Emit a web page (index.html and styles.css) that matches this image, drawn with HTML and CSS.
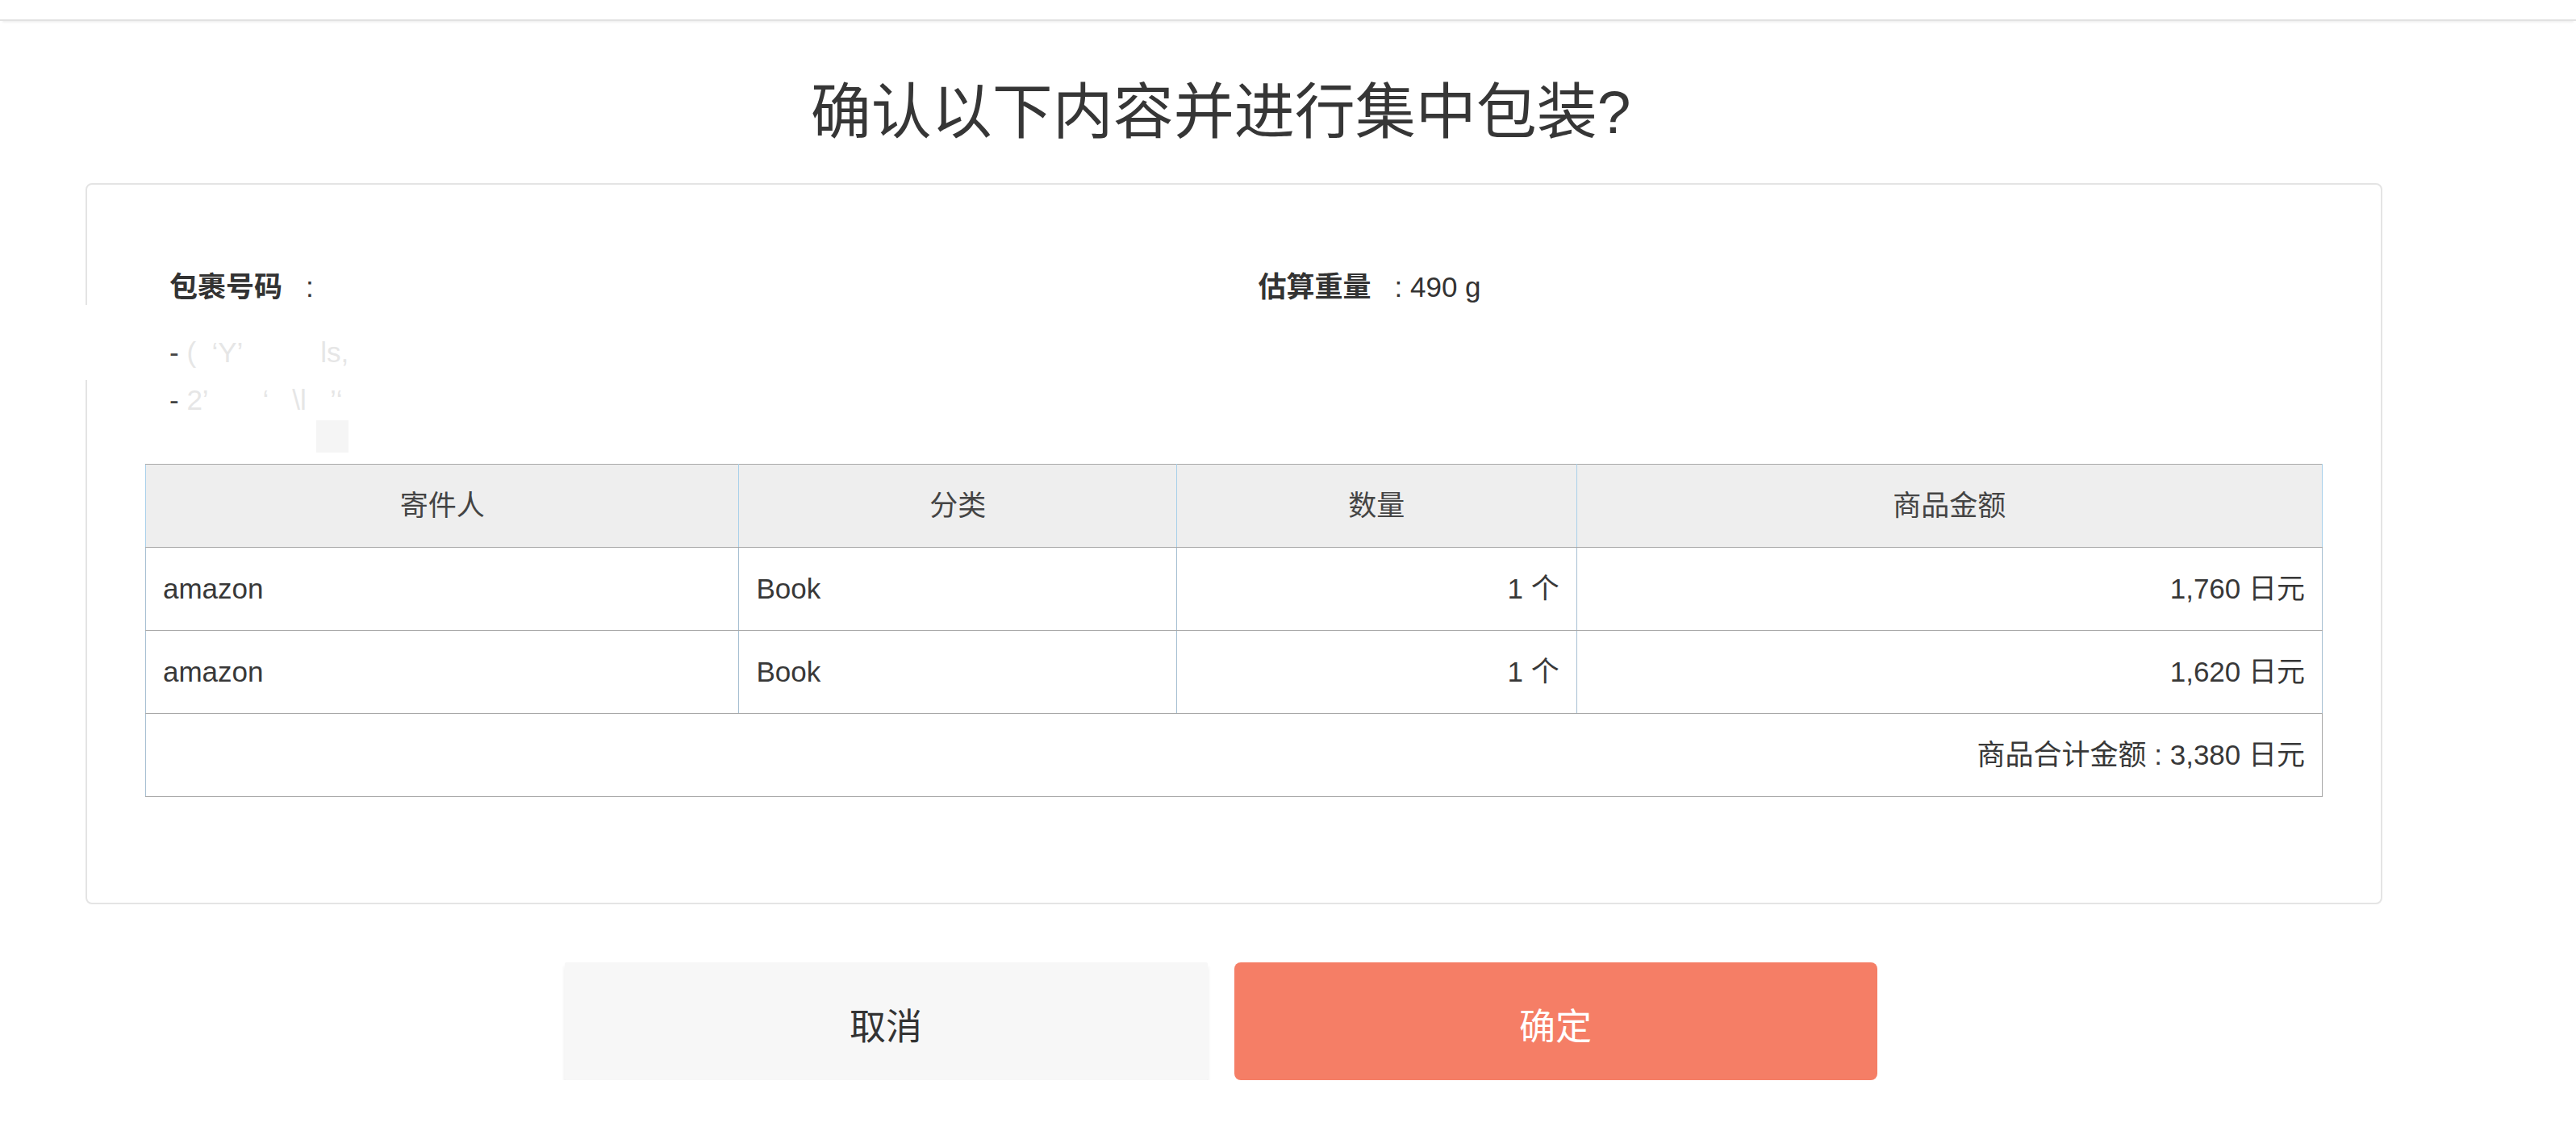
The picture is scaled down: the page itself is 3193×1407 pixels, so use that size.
FILE: index.html
```html
<!DOCTYPE html>
<html lang="zh-CN">
<head>
<meta charset="utf-8">
<title>集中包装确认</title>
<link rel="stylesheet" href="styles.css">
</head>
<body>
<header class="topbar"></header>
<main class="page">
  <h1 class="title">确认以下内容并进行集中包装?</h1>

  <section class="card">
    <div class="info">
      <div class="info-col">
        <div class="info-line"><span class="info-label">包裹号码</span>:</div>
        <ul class="parcel-list">
          <li>- <span class="faint">(  ‘Y’          ls,</span></li>
          <li>- <span class="faint">2’       ‘   \l   ’‘</span></li>
        </ul>
      </div>
      <div class="info-col">
        <div class="info-line"><span class="info-label">估算重量</span>: 490 g</div>
      </div>
    </div>

    <table class="items">
      <colgroup>
        <col class="c-sender">
        <col class="c-type">
        <col class="c-qty">
        <col class="c-price">
      </colgroup>
      <thead>
        <tr>
          <th>寄件人</th>
          <th>分类</th>
          <th>数量</th>
          <th>商品金额</th>
        </tr>
      </thead>
      <tbody>
        <tr>
          <td>amazon</td>
          <td>Book</td>
          <td class="num">1 个</td>
          <td class="num">1,760 日元</td>
        </tr>
        <tr>
          <td>amazon</td>
          <td>Book</td>
          <td class="num">1 个</td>
          <td class="num">1,620 日元</td>
        </tr>
        <tr class="total">
          <td class="num" colspan="4">商品合计金额 : 3,380 日元</td>
        </tr>
      </tbody>
    </table>

    <span class="mask-edge"></span>
    <span class="mask-spot"></span>
  </section>

  <div class="actions">
    <button class="btn btn-cancel" type="button">取消</button>
    <button class="btn btn-ok" type="button">确定</button>
  </div>
</main>
</body>
</html>
```

FILE: styles.css
```css
html, body {
  margin: 0;
  padding: 0;
  background: #ffffff;
}

body {
  font-family: "Liberation Sans", Arial, "Noto Sans CJK SC", sans-serif;
  font-size: 35px;
  color: #333333;
}

.topbar {
  height: 24px;
  border-bottom: 2px solid #e2e2e2;
  box-shadow: 0 5px 2px -3px #f2f2f2;
}

.page {
  width: 3026px;
}

.title {
  margin: 68px 0 43px;
  font-size: 75px;
  line-height: 90px;
  font-weight: normal;
  color: #363636;
  text-align: center;
}

/* summary card */
.card {
  position: relative;
  margin: 0 73px 0 106px;
  padding: 97px 72px 131px;
  border: 2px solid #e4e4e4;
  border-radius: 8px;
}

.info {
  display: grid;
  grid-template-columns: 1fr 1fr;
}

.info-col {
  padding-left: 30px;
}

.info-line {
  line-height: 59px;
  white-space: pre;
}

.info-label {
  font-weight: bold;
  margin-right: 29px;
  color: #333333;
}

.parcel-list {
  list-style: none;
  margin: 22px 0 0;
  padding: 0;
}

.parcel-list li {
  line-height: 59px;
  white-space: pre;
  color: #444444;
}

.faint {
  color: #e6e6e6;
}

/* item table */
.items {
  width: 100%;
  margin-top: 50px;
  border-collapse: collapse;
  table-layout: fixed;
  border: 1px solid #a8a8a8;
  border-left-color: #a6bfd2;
}

.c-sender { width: 27.26%; }
.c-type { width: 20.11%; }
.c-qty { width: 18.37%; }
.c-price { width: 34.26%; }

.items th,
.items td {
  padding: 0 21px;
  line-height: 102px;
  border-top: 1px solid #a8a8a8;
  border-bottom: 1px solid #a8a8a8;
  border-left: 1px solid #a6bfd2;
  border-right: 1px solid #a6bfd2;
  white-space: nowrap;
}

.items th {
  background: #eeeeee;
  font-weight: normal;
  color: #444444;
  text-align: center;
  border-left-color: #a9d0ea;
  border-right-color: #a9d0ea;
}

.items td {
  text-align: left;
  color: #383838;
}

.items td.num {
  text-align: right;
}

.items tr.total td {
  border-right-color: #a8a8a8;
}

/* scraps of white-out over the parcel numbers */
.mask-edge {
  position: absolute;
  left: -4px;
  top: 149px;
  width: 12px;
  height: 93px;
  background: #ffffff;
}

.mask-spot {
  position: absolute;
  left: 284px;
  top: 292px;
  width: 40px;
  height: 40px;
  background: #f5f5f5;
}

/* buttons */
.actions {
  display: flex;
  justify-content: center;
  gap: 33px;
  margin-top: 72px;
}

.btn {
  width: 797px;
  height: 146px;
  border: none;
  font-family: "Liberation Sans", Arial, "Noto Sans CJK SC", sans-serif;
  font-size: 45px;
  padding: 6px 0 0;
  cursor: pointer;
}

.btn-cancel {
  background: #f7f7f7;
  color: #333333;
  border-radius: 2px;
  box-shadow: 0 5px 5px rgba(0, 0, 0, 0.09);
}

.btn-ok {
  background: #f57e66;
  color: #ffffff;
  border-radius: 8px;
}
```
